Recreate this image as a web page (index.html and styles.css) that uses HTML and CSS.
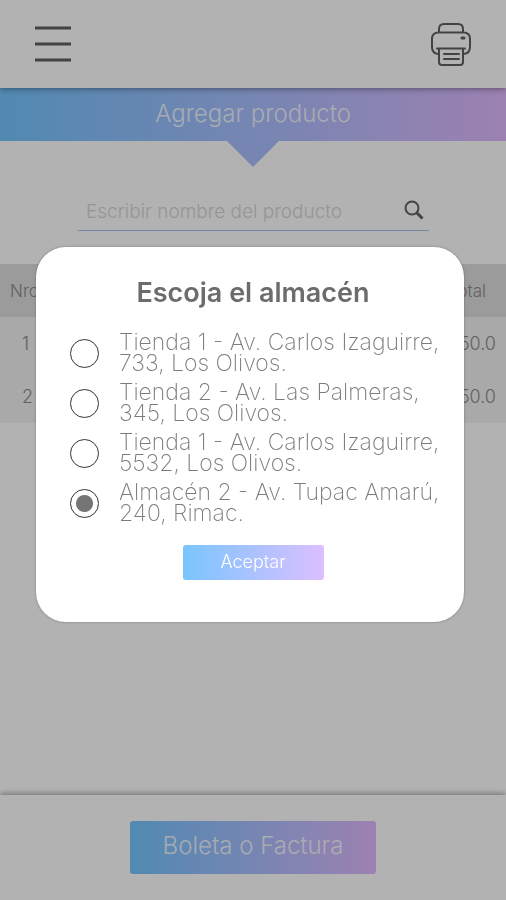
FILE: index.html
```html
<!DOCTYPE html>
<html lang="es">
<head>
<meta charset="utf-8">
<meta name="viewport" content="width=device-width, initial-scale=1">
<title>Agregar producto</title>
<link rel="stylesheet" href="styles.css">
</head>
<body>
<div class="page">
  <header class="topbar">
    <button class="icon-button" type="button" aria-label="Menú">
      <svg width="36" height="36" viewBox="0 0 36 36"><path d="M0 2h36M0 18h36M0 34h36" fill="none" stroke="currentColor" stroke-width="3"/></svg>
    </button>
    <button class="icon-button" type="button" aria-label="Imprimir">
      <svg width="42" height="44" viewBox="0 0 42 44" fill="none" stroke="currentColor" stroke-width="2" stroke-linecap="round" stroke-linejoin="round">
        <path d="M9 10V7Q9 2 14 2H28Q33 2 33 7V10"/>
        <path d="M8.500 32Q2 31.500 2 25V17Q2 10.500 8.500 10.500H33.500Q40 10.500 40 17V25Q40 31.500 33.500 32"/>
        <path d="M7 26.500H35M9 26.500V40Q9 43 12 43H30Q33 43 33 40V26.500M14 32H29M14 37H29"/>
        <path d="M32 16H34" stroke-width="3"/>
      </svg>
    </button>
  </header>
  <main class="content">
    <h1 class="banner">Agregar producto</h1>
    <form class="search">
      <input class="search-input" type="text" aria-label="Nombre del producto" placeholder="Escribir nombre del producto">
      <button class="icon-button" type="button" aria-label="Buscar">
        <svg width="20" height="20" viewBox="0 0 20 20" fill="none" stroke="currentColor" stroke-width="2"><circle cx="8" cy="8" r="6.500"/><path d="M12.500 12.500L18.500 18.500" stroke-width="3"/></svg>
      </button>
    </form>
    <table class="products">
      <thead><tr><th>Nro</th><th class="amount">Total</th></tr></thead>
      <tbody>
        <tr><td>1</td><td class="amount">50.0</td></tr>
        <tr><td>2</td><td class="amount">50.0</td></tr>
      </tbody>
    </table>
  </main>
  <footer class="bottombar">
    <button class="button button-large" type="button">Boleta o Factura</button>
  </footer>
</div>
<div class="overlay">
  <form class="modal" role="dialog" aria-modal="true" aria-labelledby="modal-title">
    <h2 class="modal-title" id="modal-title">Escoja el almacén</h2>
    <div class="options">
      <label class="option"><input class="radio" type="radio" name="store"><span>Tienda 1 - Av. Carlos Izaguirre,<br>733, Los Olivos.</span></label>
      <label class="option"><input class="radio" type="radio" name="store"><span>Tienda 2 - Av. Las Palmeras,<br>345, Los Olivos.</span></label>
      <label class="option"><input class="radio" type="radio" name="store"><span>Tienda 1 - Av. Carlos Izaguirre,<br>5532, Los Olivos.</span></label>
      <label class="option"><input class="radio" type="radio" name="store" checked><span>Almacén 2 - Av. Tupac Amarú,<br>240, Rimac.</span></label>
    </div>
    <button class="button" type="button">Aceptar</button>
  </form>
</div>
</body>
</html>
```
FILE: styles.css
```css
* {
  box-sizing: border-box;
}

body {
  margin: 0;
  font-family: Inter, "Liberation Sans", sans-serif;
  font-weight: 300;
  color: #6c6c6c;
}

button,
input {
  font: inherit;
}

.page {
  display: flex;
  flex-direction: column;
  min-height: 100vh;
  background: #fff;
}

.topbar {
  position: relative;
  z-index: 1;
  display: flex;
  align-items: center;
  justify-content: space-between;
  height: 88px;
  padding: 0 34px 0 35px;
  background: #fff;
  box-shadow: 0 1px 6px rgba(0, 0, 0, 0.4);
}

.icon-button {
  display: flex;
  padding: 0;
  border: 0;
  background: none;
  color: #606060;
}

.content {
  flex: 1;
}

.banner {
  position: relative;
  display: flex;
  align-items: center;
  justify-content: center;
  height: 53px;
  margin: 0;
  padding-bottom: 2px;
  background: linear-gradient(90deg, #74c5ff, #e0baff);
  color: rgba(255, 255, 255, 0.85);
  font-size: 24px;
  font-weight: 300;
}

.banner::after {
  content: "";
  position: absolute;
  top: 100%;
  left: 50%;
  border: 26px solid transparent;
  border-top-color: #abbfff;
  border-bottom: 0;
  transform: translateX(-50%);
}

.search {
  display: flex;
  align-items: center;
  height: 42px;
  margin: 48px 77px 33px 78px;
  padding: 0 5px 0 8px;
  border-bottom: 1px solid #a9c0ec;
}

.search-input {
  flex: 1;
  min-width: 0;
  padding: 4px 0 0;
  border: 0;
  outline: 0;
  background: none;
  font-size: 19px;
}

.search-input::placeholder {
  color: #d6d6d6;
  opacity: 1;
}

.products {
  width: 100%;
  border-collapse: collapse;
  background: #f2f2f2;
  color: #8c8c8c;
  font-size: 18px;
}

.products th,
.products td {
  height: 53px;
  padding: 0 10px;
  font-weight: 300;
  text-align: left;
}

.products th {
  background: #dedede;
  font-size: 17px;
}

.products td {
  padding-left: 22px;
}

.products .amount {
  text-align: right;
}

.products th.amount {
  padding-right: 20px;
}

.bottombar {
  display: flex;
  justify-content: center;
  padding: 26px 0;
  box-shadow: 0 -2px 5px rgba(0, 0, 0, 0.3);
}

.button {
  width: 141px;
  height: 35px;
  padding: 0 0 2px;
  border: 0;
  border-radius: 3px;
  background: linear-gradient(90deg, #7ac5ff, #dcbfff);
  color: #fff;
  font-size: 18px;
}

.button-large {
  width: 246px;
  height: 53px;
  padding-bottom: 4px;
  background: linear-gradient(90deg, #74c5ff, #e0baff);
  color: rgba(255, 255, 255, 0.85);
  font-size: 24px;
}

.overlay {
  position: fixed;
  z-index: 2;
  inset: 0;
  display: flex;
  align-items: center;
  padding: 0 42px 31px 36px;
  background: rgba(0, 0, 0, 0.3);
}

.modal {
  display: flex;
  flex: 1;
  flex-direction: column;
  align-items: center;
  min-width: 0;
  padding: 30px 28px 42px 34px;
  border-radius: 30px;
  background: #fff;
  box-shadow: 0 0 3px rgba(0, 0, 0, 0.3);
}

.modal-title {
  margin: 0 0 23px;
  font-size: 27px;
  line-height: 32px;
  font-weight: 600;
}

.options {
  display: flex;
  flex-direction: column;
  gap: 8px;
  align-self: stretch;
  margin-bottom: 21px;
}

.option {
  display: flex;
  align-items: center;
  gap: 20px;
  color: #7c7c7c;
  font-size: 23px;
  font-weight: 200;
  line-height: 21px;
  white-space: nowrap;
}

.radio {
  appearance: none;
  flex: none;
  width: 29px;
  height: 29px;
  margin: 0;
  border: 1px solid #333;
  border-radius: 50%;
}

.radio:checked {
  background: radial-gradient(circle, #757575 8px, transparent 9px);
}
```
